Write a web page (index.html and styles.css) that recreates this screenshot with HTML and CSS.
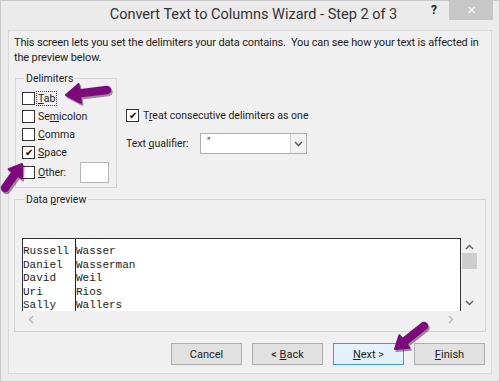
FILE: index.html
```html
<html>
    <head>
        <title>Convert Text to Columns Wizard</title>
        <link rel="stylesheet" href="styles.css">
    </head>
    <body>
        <div class="window">
            <div class="titlebar">
                <div class="title">Convert Text to Columns Wizard - Step 2 of 3</div>
                <div class="help">?</div>
                <div class="close">&#x2715;</div>
            </div>

            <div class="client">
                <p class="intro">This screen lets you set the delimiters your data contains.&nbsp; You can see how your text is affected in the preview below.</p>

                <div class="options">
                    <fieldset class="group delims">
                        <legend>Delimiters</legend>
                        <div class="check"><span class="box"></span><span class="focus"><u>T</u>ab</span></div>
                        <div class="check"><span class="box"></span><span>Se<u>m</u>icolon</span></div>
                        <div class="check"><span class="box"></span><span><u>C</u>omma</span></div>
                        <div class="check"><span class="box on">&#x2714;</span><span><u>S</u>pace</span></div>
                        <div class="check other"><span class="box"></span><span><u>O</u>ther:</span><span class="textbox"></span></div>
                    </fieldset>

                    <div class="more">
                        <div class="check"><span class="box on">&#x2714;</span><span>T<u>r</u>eat consecutive delimiters as one</span></div>
                        <div class="qualifier">
                            <span class="qlabel">Text <u>q</u>ualifier:</span>
                            <div class="combo">
                                <span class="combo-val">"</span>
                                <span class="combo-btn">
                                    <svg width="9" height="6" viewBox="0 0 9 6"><path d="M1 1 L4.5 4.5 L8 1" fill="none" stroke="#555" stroke-width="1.4"/></svg>
                                </span>
                            </div>
                        </div>
                    </div>
                </div>

                <fieldset class="group preview-group">
                    <legend>Data <u>p</u>review</legend>
                    <div class="preview">
                        <div class="sheet">
                            <div class="col first">
                                <div>Russell</div>
                                <div>Daniel</div>
                                <div>David</div>
                                <div>Uri</div>
                                <div>Sally</div>
                            </div>
                            <div class="col">
                                <div>Wasser</div>
                                <div>Wasserman</div>
                                <div>Weil</div>
                                <div>Rios</div>
                                <div>Wallers</div>
                            </div>
                        </div>
                        <div class="vscroll">
                            <svg width="9" height="6" viewBox="0 0 9 6"><path d="M1 5 L4.5 1.5 L8 5" fill="none" stroke="#606060" stroke-width="1.4"/></svg>
                            <div class="thumb"></div>
                            <div class="spacer"></div>
                            <svg width="9" height="6" viewBox="0 0 9 6"><path d="M1 1 L4.5 4.5 L8 1" fill="none" stroke="#606060" stroke-width="1.4"/></svg>
                        </div>
                        <div class="hscroll">
                            <svg width="6" height="9" viewBox="0 0 6 9"><path d="M5 1 L1.5 4.5 L5 8" fill="none" stroke="#b5b5b5" stroke-width="1.4"/></svg>
                            <svg width="6" height="9" viewBox="0 0 6 9"><path d="M1 1 L4.5 4.5 L1 8" fill="none" stroke="#b5b5b5" stroke-width="1.4"/></svg>
                        </div>
                    </div>
                </fieldset>

                <div class="buttons">
                    <div class="btn"><span>Cancel</span></div>
                    <div class="btn"><span>&lt; <u>B</u>ack</span></div>
                    <div class="btn default"><span><u>N</u>ext &gt;</span></div>
                    <div class="btn"><span><u>F</u>inish</span></div>
                </div>
            </div>

            <!-- the purple arrows drawn over the dialog -->
            <svg class="arrows" width="500" height="382" viewBox="0 0 500 382">
                <g fill="#3a0a3a" stroke="#3a0a3a" opacity="0.45" transform="translate(1.5 2)">
                    <line x1="107" y1="90" x2="79" y2="93.4" stroke-width="8.5" stroke-linecap="round"/>
                    <polygon points="66,95 81,102.8 78.6,84" stroke-width="2" stroke-linejoin="round"/>
                    <line x1="5" y1="188" x2="15.1" y2="173.8" stroke-width="8.5" stroke-linecap="round"/>
                    <polygon points="22,164 21.6,178.4 8.6,169.2" stroke-width="2" stroke-linejoin="round"/>
                    <line x1="424" y1="326" x2="404.4" y2="341.5" stroke-width="8.5" stroke-linecap="round"/>
                    <polygon points="395,349 409.4,347.8 399.4,335.2" stroke-width="2" stroke-linejoin="round"/>
                </g>
                <g fill="#7d0a7d" stroke="#7d0a7d">
                    <line x1="107" y1="90" x2="79" y2="93.4" stroke-width="8.5" stroke-linecap="round"/>
                    <polygon points="66,95 81,102.8 78.6,84" stroke-width="2" stroke-linejoin="round"/>
                    <line x1="5" y1="188" x2="15.1" y2="173.8" stroke-width="8.5" stroke-linecap="round"/>
                    <polygon points="22,164 21.6,178.4 8.6,169.2" stroke-width="2" stroke-linejoin="round"/>
                    <line x1="424" y1="326" x2="404.4" y2="341.5" stroke-width="8.5" stroke-linecap="round"/>
                    <polygon points="395,349 409.4,347.8 399.4,335.2" stroke-width="2" stroke-linejoin="round"/>
                </g>
            </svg>
        </div>
    </body>
</html>
```

FILE: styles.css
```css
* {
    box-sizing: border-box;
}
body {
    margin: 0;
    font-family: Roboto, "Open Sans", sans-serif;
    font-size: 10.5px;
    color: #1e1e1e;
}
u {
    text-decoration: underline;
    text-underline-offset: 1px;
}

/* window frame */
.window {
    position: relative;
    width: 500px;
    height: 382px;
    background: #ebebeb;
    border: 1px solid #c8c8c8;
    display: flex;
    flex-direction: column;
}
.titlebar {
    height: 29px;
    display: flex;
    align-items: flex-start;
}
.title {
    flex: 1;
    padding-left: 75px;
    padding-top: 5px;
    text-align: center;
    font-size: 14.5px;
    color: #333;
}
.help {
    width: 18px;
    padding-top: 2px;
    font-weight: bold;
    font-size: 12px;
    color: #222;
    text-align: left;
}
.close {
    width: 44px;
    height: 20px;
    margin-right: 6px;
    margin-top: -1px;
    background: #c7c7c7;
    color: #fff;
    font-size: 11px;
    display: flex;
    align-items: center;
    justify-content: center;
}

/* client area */
.client {
    flex: 1;
    margin: 0 7px 7px 7px;
    background: #f0f0f0;
    border: 1px solid #d9d9d9;
    display: flex;
    flex-direction: column;
}
.intro {
    margin: 0;
    padding: 4px 2px 0 5px;
    font-size: 11px;
    letter-spacing: -0.15px;
    line-height: 15px;
}

.options {
    display: flex;
    margin-top: 6px;
}
.group {
    margin: 0;
    border: 1px solid #d5d5d5;
    padding: 0;
}
.group legend {
    padding: 0 2px;
    margin-left: 2px;
    line-height: 15px;
}
.delims {
    width: 102px;
    margin-left: 6px;
    padding: 3px 0 4px 6px;
}
.check {
    height: 18px;
    display: flex;
    align-items: center;
}
.box {
    width: 13px;
    height: 13px;
    border: 1px solid #333;
    background: #fff;
    margin-right: 3px;
    font-size: 10px;
    line-height: 11px;
    text-align: center;
    color: #000;
}
.focus {
    outline: 1px dotted #444;
    outline-offset: 0;
    padding: 0 1px;
    margin-left: -1px;
}
.other {
    height: 22px;
}
.textbox {
    width: 29px;
    height: 21px;
    margin-left: 14px;
    background: #fff;
    border: 1px solid #b5b5b5;
}

.more {
    padding-left: 9px;
    padding-top: 35px;
}
.more .check .box {
    margin-right: 4px;
}
.qualifier {
    display: flex;
    align-items: center;
    margin-top: 9px;
}
.qlabel {
    width: 74px;
}
.combo {
    width: 107px;
    height: 21px;
    border: 1px solid #adadad;
    background: #fff;
    display: flex;
}
.combo-val {
    flex: 1;
    padding-left: 6px;
    line-height: 16px;
}
.combo-btn {
    width: 16px;
    border-left: 1px solid #d0d0d0;
    background: #f2f2f2;
    display: flex;
    align-items: center;
    justify-content: center;
}

/* data preview */
.preview-group {
    margin: 4px 5px 0 5px;
    padding: 31px 7px 4px 7px;
}
.preview {
    display: grid;
    grid-template-columns: 1fr 17px;
    grid-template-rows: 73px 16px;
}
.sheet {
    background: #fff;
    border: 1px solid #333;
    border-bottom: none;
    display: flex;
    font-family: "Liberation Mono", monospace;
    font-size: 11px;
    line-height: 13.5px;
    color: #222;
    overflow: hidden;
}
.col {
    padding-top: 6px;
}
.col.first {
    width: 53px;
    border-right: 1px solid #222;
}
.vscroll {
    display: flex;
    flex-direction: column;
    align-items: center;
    padding: 6px 0 5px 0;
}
.thumb {
    width: 15px;
    height: 16px;
    background: #cdcdcd;
    margin-top: 3px;
}
.spacer {
    flex: 1;
}
.hscroll {
    display: flex;
    justify-content: space-between;
    align-items: center;
    padding: 0 7px 0 6px;
}

/* buttons */
.buttons {
    display: flex;
    justify-content: flex-end;
    gap: 10px;
    margin-top: 11px;
    padding-right: 6px;
}
.btn {
    width: 71px;
    height: 22px;
    background: #e1e1e1;
    border: 1px solid #adadad;
    display: flex;
    align-items: center;
    justify-content: center;
    font-size: 11px;
}
.btn.default {
    border-color: #3c9ae6;
    background: #e5f1fb;
}

.arrows {
    position: absolute;
    left: -1px;
    top: -1px;
    pointer-events: none;
}
```
